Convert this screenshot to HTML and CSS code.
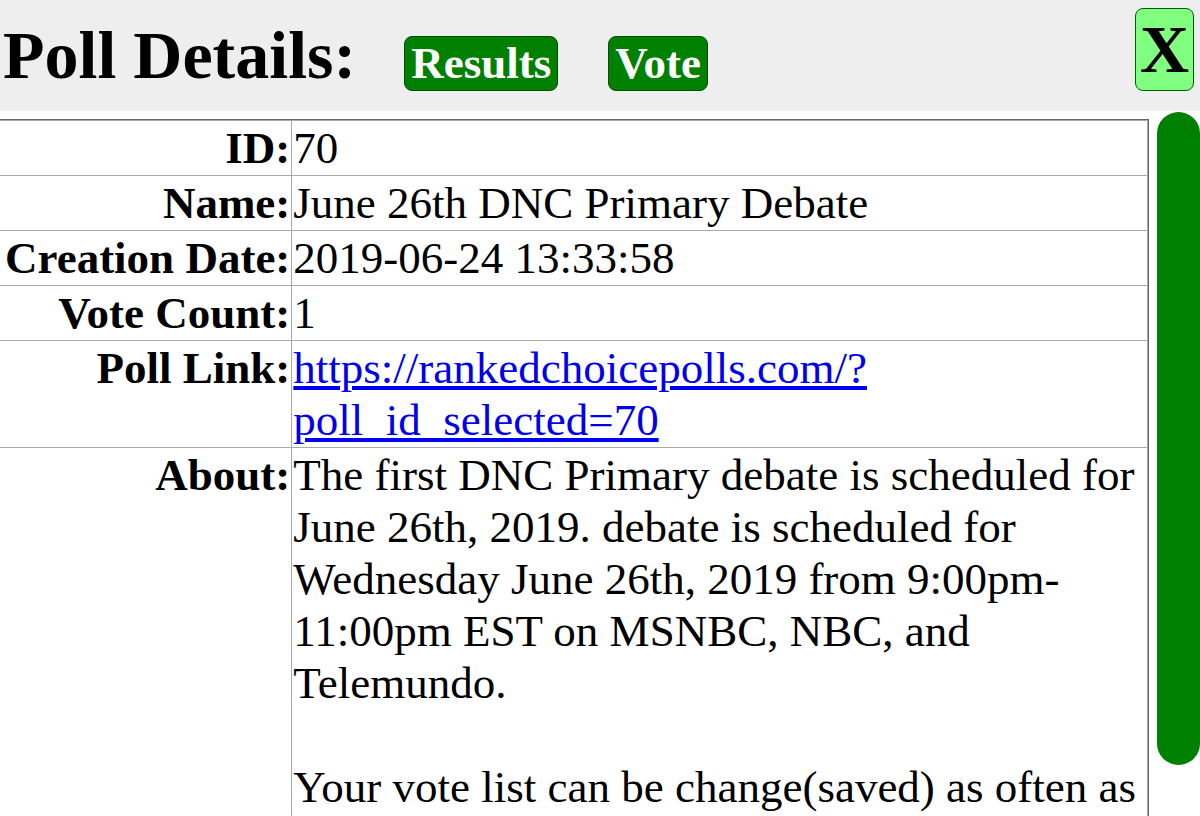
FILE: index.html
```html
<!DOCTYPE html>
<html lang="en">
<head>
    <meta charset="UTF-8">
    <meta name="viewport" content="width=device-width, initial-scale=1.0">
    <title>Poll Details</title>
    <link rel="stylesheet" href="styles.css">
</head>
<body>
    <header class="poll-header">
        <h1 class="poll-title">Poll Details:</h1>
        <button type="button" class="green-btn">Results</button>
        <button type="button" class="green-btn">Vote</button>
        <button type="button" class="close-btn">X</button>
    </header>

    <div class="poll-body">
        <div class="poll-content">
            <table class="details">
                <tr>
                    <td class="label">ID:</td>
                    <td>70</td>
                </tr>
                <tr>
                    <td class="label">Name:</td>
                    <td>June 26th DNC Primary Debate</td>
                </tr>
                <tr>
                    <td class="label">Creation Date:</td>
                    <td>2019-06-24 13:33:58</td>
                </tr>
                <tr>
                    <td class="label">Vote Count:</td>
                    <td>1</td>
                </tr>
                <tr>
                    <td class="label">Poll Link:</td>
                    <td><a href="#">https://rankedchoicepolls.com/?poll_id_selected=70</a></td>
                </tr>
                <tr>
                    <td class="label">About:</td>
                    <td>The first DNC Primary debate is scheduled for June 26th, 2019. debate is scheduled for Wednesday June 26th, 2019 from 9:00pm-11:00pm EST on MSNBC, NBC, and Telemundo.<br><br>Your vote list can be change(saved) as often as you like until the poll closes.</td>
                </tr>
            </table>
        </div>
        <div class="scroll-rail">
            <div class="scroll-thumb"></div>
        </div>
    </div>
</body>
</html>
```

FILE: styles.css
```css
body {
    margin: 0;
    font-family: "Liberation Serif", "Times New Roman", serif;
    color: #000;
    background-color: #fff;
}

.poll-header {
    display: flex;
    align-items: baseline;
    height: 111px;
    box-sizing: border-box;
    padding: 16px 6px 0 3px;
    background-color: #eee;
}

.poll-title {
    margin: 0 48px 0 0;
    font-size: 68px;
    font-weight: bold;
    line-height: normal;
}

.green-btn {
    margin-right: 50px;
    padding: 0 6px 1px;
    font-family: inherit;
    font-size: 45px;
    font-weight: bold;
    color: #fff;
    background-color: #008000;
    border: 1px solid #005000;
    border-radius: 8px;
    cursor: pointer;
}

.close-btn {
    align-self: flex-start;
    margin: -8px 0 0 auto;
    padding: 1px 4px;
    font-family: inherit;
    font-size: 68px;
    font-weight: bold;
    line-height: normal;
    color: #000;
    background-color: #80ff80;
    border: 1px solid #006000;
    border-radius: 8px;
    cursor: pointer;
}

/* area below the header, with its own green scroll bar */
.poll-body {
    display: flex;
    height: 705px;
    overflow: hidden;
}

.poll-content {
    flex: 1;
    padding: 8px 8px 8px 0;
}

.scroll-rail {
    flex: none;
    width: 43px;
    padding-top: 1px;
}

.scroll-thumb {
    height: 653px;
    background-color: #008000;
    border-radius: 22px;
}

.details {
    width: 100%;
    border-spacing: 0;
    border: 1px solid #666;
    border-left: none;
    font-size: 45px;
}

.details td {
    padding: 1px;
    vertical-align: top;
    border-top: 1px solid #a9a9a9;
    border-right: 1px solid #a9a9a9;
}

.details .label {
    width: 1%;
    padding-left: 5px;
    text-align: right;
    font-weight: bold;
    white-space: nowrap;
}

.details a {
    color: #0000ee;
}
```
